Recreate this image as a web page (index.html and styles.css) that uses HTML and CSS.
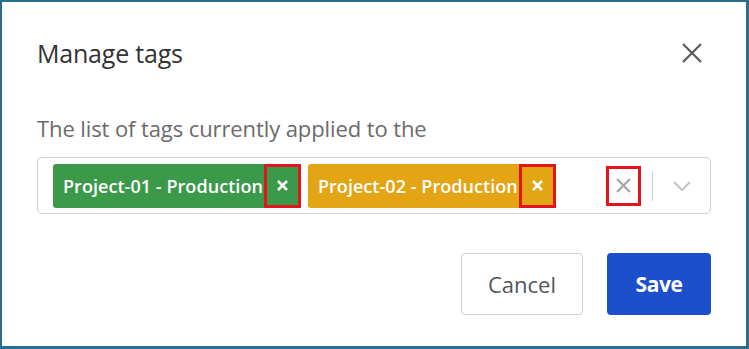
FILE: index.html
```html
<!DOCTYPE html>
<html lang="en">
<head>
    <meta charset="UTF-8">
    <meta name="viewport" content="width=device-width, initial-scale=1.0">
    <title>Manage tags</title>
    <link rel="stylesheet" href="styles.css">
</head>
<body>
    <div class="dialog">
        <header class="dialog-header">
            <h1>Manage tags</h1>
            <button class="close-btn" aria-label="Close">
                <svg width="22" height="22" viewBox="0 0 22 22">
                    <path d="M2 2 L20 20 M20 2 L2 20" stroke="#5a5a5a" stroke-width="2.2" fill="none"/>
                </svg>
            </button>
        </header>

        <p class="hint">The list of tags currently applied to the</p>

        <div class="tag-select">
            <div class="tag-list">
                <span class="tag tag-green">
                    <span class="tag-label">Project-01 - Production</span>
                    <span class="tag-remove highlight">
                        <svg width="13" height="13" viewBox="0 0 13 13">
                            <path d="M2 2 L11 11 M11 2 L2 11" stroke="#ffffff" stroke-width="2.5" fill="none"/>
                        </svg>
                    </span>
                </span>
                <span class="tag tag-yellow">
                    <span class="tag-label">Project-02 - Production</span>
                    <span class="tag-remove highlight">
                        <svg width="13" height="13" viewBox="0 0 13 13">
                            <path d="M2 2 L11 11 M11 2 L2 11" stroke="#ffffff" stroke-width="2.5" fill="none"/>
                        </svg>
                    </span>
                </span>
            </div>
            <div class="select-controls">
                <span class="clear-all highlight">
                    <svg width="17" height="17" viewBox="0 0 17 17">
                        <path d="M2 2 L15 15 M15 2 L2 15" stroke="#a8a8a8" stroke-width="2.4" fill="none"/>
                    </svg>
                </span>
                <span class="divider"></span>
                <span class="chevron">
                    <svg width="20" height="12" viewBox="0 0 20 12">
                        <path d="M2 2 L10 10 L18 2" stroke="#c4c4c4" stroke-width="2" fill="none"/>
                    </svg>
                </span>
            </div>
        </div>

        <div class="footer">
            <button class="btn btn-cancel">Cancel</button>
            <button class="btn btn-save">Save</button>
        </div>
    </div>
</body>
</html>
```

FILE: styles.css
```css
:root {
    --frame: #2a6c8e;
    --text-primary: #333333;
    --text-secondary: #6b6b6b;
    --border: #cfcfcf;
    --green: #3b9a4a;
    --yellow: #e3a513;
    --blue: #1c4fcc;
    --mark: #e3141c;
}

* {
    box-sizing: border-box;
    margin: 0;
    padding: 0;
}

body {
    font-family: 'Open Sans', 'Noto Sans', sans-serif;
    background-color: #ffffff;
    color: var(--text-primary);
    width: 749px;
    height: 349px;
    overflow: hidden;
}

.dialog {
    width: 749px;
    height: 349px;
    border-style: solid;
    border-color: var(--frame);
    border-width: 2px 3px 3px 2px;
    padding: 0 35px;
    background-color: #ffffff;
}

.dialog-header {
    display: flex;
    align-items: center;
    justify-content: space-between;
    padding-top: 34px;
    height: 68px;
}

h1 {
    font-weight: 400;
    font-size: 25px;
    line-height: 34px;
    color: var(--text-primary);
    letter-spacing: -0.2px;
}

.close-btn {
    background: none;
    border: none;
    width: 22px;
    height: 22px;
    margin-right: 8px;
    cursor: pointer;
}

.hint {
    margin-top: 44px;
    font-size: 22px;
    line-height: 28px;
    color: var(--text-secondary);
    letter-spacing: -0.1px;
}

.tag-select {
    margin-top: 15px;
    height: 57px;
    border: 1px solid var(--border);
    border-radius: 5px;
    display: flex;
    align-items: center;
    justify-content: space-between;
    padding: 0 0 0 15px;
}

.tag-list {
    display: flex;
    gap: 7px;
}

.tag {
    display: flex;
    height: 44px;
    border-radius: 3px;
    color: #ffffff;
    font-size: 18px;
    font-weight: 600;
}

.tag-green {
    background-color: var(--green);
}

.tag-yellow {
    background-color: var(--yellow);
}

.tag-label {
    display: flex;
    align-items: center;
    padding: 0 1px 0 10px;
    letter-spacing: 0.05px;
}

.tag-remove {
    width: 37px;
    display: flex;
    align-items: center;
    justify-content: center;
}

.highlight {
    border: 3px solid var(--mark);
}

.select-controls {
    display: flex;
    align-items: center;
    height: 100%;
}

.clear-all {
    width: 35px;
    height: 40px;
    display: flex;
    align-items: center;
    justify-content: center;
}

.divider {
    width: 1px;
    height: 30px;
    background-color: var(--border);
    margin-left: 11px;
}

.chevron {
    display: flex;
    align-items: center;
    justify-content: center;
    width: 57px;
}

.footer {
    display: flex;
    justify-content: flex-end;
    gap: 24px;
    margin-top: 39px;
}

.btn {
    height: 62px;
    border-radius: 4px;
    font-family: inherit;
    cursor: pointer;
}

.btn-cancel {
    width: 122px;
    background-color: #ffffff;
    border: 1px solid var(--border);
    color: #555555;
    font-size: 22px;
}

.btn-save {
    width: 104px;
    background-color: var(--blue);
    border: none;
    color: #ffffff;
    font-size: 21px;
    font-weight: 700;
    letter-spacing: -0.4px;
}
```
